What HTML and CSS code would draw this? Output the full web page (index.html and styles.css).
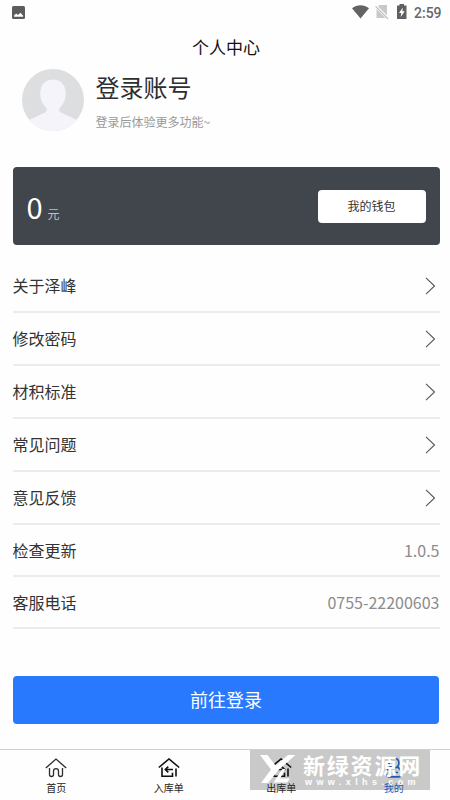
FILE: index.html
```html
<!DOCTYPE html>
<html lang="zh-CN">
<head>
<meta charset="utf-8">
<title>个人中心</title>
<link rel="stylesheet" href="styles.css">
</head>
<body>
<div class="screen">
  <div class="status">
    <svg class="status-pic" width="13" height="13" viewBox="0 0 13 13"><rect width="13" height="13" rx="1.5" fill="#5c5c5c"/><path d="M2 10.800V9.500L4.200 7.500l1.700 1.500L8.400 6.800l2.700 3v1z" fill="#fff"/></svg>
    <svg class="status-icons" width="56" height="16" viewBox="0 0 56 16">
      <path d="M0 4.200C5 .3 12 .3 17 4.200L8.500 14.500z" fill="#636363"/>
      <path d="M27.500 1h7.500v13H24.500V4z" fill="#c8c8c8"/><path d="M23 1.500l13.500 13.500" stroke="#fefefe" stroke-width="3"/><path d="M23.600 2.400l12.400 12.400" stroke="#bbb" stroke-width="1.200"/>
      <path d="M45 1.500h2.500V0H52v1.500h2.500V15H45z" fill="#606060"/><path d="M50.800 3.500L47 9h2.300l-.6 4 4-5.700h-2.300z" fill="#fff"/>
    </svg>
    <span class="time">2:59</span>
  </div>
  <h1 class="title">个人中心</h1>
  <div class="profile">
    <svg class="avatar" width="62" height="62" viewBox="0 0 62 62">
      <defs><clipPath id="disc"><circle cx="31" cy="31" r="31"/></clipPath></defs>
      <g clip-path="url(#disc)"><path fill="#dcdee0" d="M0 0h62v62H0z"/><path fill="#f4f4fa" d="M31 10.500c8 0 12.800 6 12.800 14 0 6-2.500 11-5.800 14-1.500 2-1 4 1.500 5.300L55 51v11H7V51l15.500-7.200C25 42.500 25.500 40.500 24 38.500c-3.300-3-5.800-8-5.800-14 0-8 4.800-14 12.800-14z"/></g>
    </svg>
    <div class="who"><div class="name">登录账号</div><div class="hint">登录后体验更多功能~</div></div>
  </div>
  <div class="wallet">
    <div class="money"><span class="amount">0</span><span class="unit">元</span></div>
    <div class="wallet-btn">我的钱包</div>
  </div>
  <div class="list">
    <div class="row"><span>关于泽峰</span><svg class="arrow" viewBox="0 0 11 18"><path d="M1 .8L9.500 9 1 17.200"/></svg></div>
    <div class="row"><span>修改密码</span><svg class="arrow" viewBox="0 0 11 18"><path d="M1 .8L9.500 9 1 17.200"/></svg></div>
    <div class="row"><span>材积标准</span><svg class="arrow" viewBox="0 0 11 18"><path d="M1 .8L9.500 9 1 17.200"/></svg></div>
    <div class="row"><span>常见问题</span><svg class="arrow" viewBox="0 0 11 18"><path d="M1 .8L9.500 9 1 17.200"/></svg></div>
    <div class="row"><span>意见反馈</span><svg class="arrow" viewBox="0 0 11 18"><path d="M1 .8L9.500 9 1 17.200"/></svg></div>
    <div class="row short"><span>检查更新</span><span class="value">1.0.5</span></div>
    <div class="row short"><span>客服电话</span><span class="value">0755-22200603</span></div>
  </div>
  <div class="login">前往登录</div>
  <div class="tabs">
    <div class="tab"><svg class="tab-icon" viewBox="0 0 22 20"><path d="M.8 10L11 1l10.200 9M4.500 10v6.500q0 2 2 2t2-2V13q0-2.300 2.500-2.300t2.500 2.300v3.500q0 2 2 2t2-2V10"/></svg><span>首页</span></div>
    <div class="tab"><svg class="tab-icon bold" viewBox="0 0 22 20"><path d="M.8 9.500L11 1l10.200 8.500M4 9.500v8.800h10.500v-3.500M18 10.500v8M15 11.500H7.500M10.300 8.700l-3 2.800 3 2.800"/></svg><span>入库单</span></div>
    <div class="tab"><svg class="tab-icon bold" viewBox="0 0 22 20"><path d="M.8 9.500L11 1l10.200 8.500M4 9.500v8.800h10.500v-3.500M18 10.500v8M7 11.500h7.500M11.700 8.700l3 2.800-3 2.800"/></svg><span>出库单</span></div>
    <div class="tab active"><svg class="tab-icon" viewBox="0 0 22 20"><circle cx="11" cy="5" r="5"/><path d="M7.500 9C4.500 11 3.500 13 3.500 16q0 2.800 3 2.800h9q3 0 3-2.800c0-3-1-5-4-7M11 14.500h4"/></svg><span>我的</span></div>
  </div>
  <div class="mark-bg"></div>
  <div class="watermark">
    <svg class="mark" width="36" height="32" viewBox="0 0 36 32"><path d="M0 1h7.500l8 10.500L28 1h7.500L19 15.500 8 29H1l10-13.500zM22.500 15h3l-5.500 9.500h10l-3 4H13.500z" fill="#fff"/></svg>
    <div class="mark-text"><div class="mark-cn">新绿资源网</div><div class="mark-url">www.xlhs.com</div></div>
  </div>
</div>
</body>
</html>
```
FILE: styles.css
```css
* { box-sizing: border-box; }
body { margin: 0; background: #fff; font-family: "Noto Sans CJK SC", sans-serif; color: #333; }
.screen { position: relative; isolation: isolate; width: 450px; height: 800px; overflow: hidden; display: flex; flex-direction: column; background: #fefefe; }
svg { display: block; flex: none; }
.status { height: 25px; flex: none; display: flex; align-items: center; padding: 0 7px 0 12px; }
.status-icons { margin-left: auto; margin-top: -1px; }
.time { margin-left: 6px; width: 29px; font: 500 14px/24px Roboto, sans-serif; color: #666; white-space: nowrap; }
.title { margin: 0; height: 44px; flex: none; font-size: 17px; line-height: 43px; font-weight: 400; text-align: center; color: #111; padding-left: 2px; }
.profile { display: flex; height: 62px; flex: none; padding-left: 21.5px; gap: 12px; }
.name { font-size: 24px; line-height: 35px; color: #2c2e30; }
.hint { margin-top: 9px; font-size: 12px; line-height: 18px; color: #999; }
.wallet { margin: 36px 10.5px 0 12.5px; height: 78px; flex: none; display: flex; align-items: center; justify-content: space-between; padding: 0 14px; border-radius: 4px; background: #41454c; }
.money { display: flex; align-items: baseline; gap: 5px; color: #fff; }
.amount { font-size: 29px; line-height: 42px; }
.unit { font-size: 12px; color: #c0c2c5; }
.wallet-btn { width: 108px; height: 33px; border-radius: 4px; background: #fff; font-size: 12px; line-height: 32px; text-align: center; }
.list { margin: 15px 10.5px 0 12.5px; flex: none; }
.row { height: 53px; display: flex; align-items: center; justify-content: space-between; padding-bottom: 1px; border-bottom: 2px solid #ebecee; font-size: 16px; }
.row.short { height: 52px; }
.value { color: #8c8c8c; }
.arrow { width: 11px; height: 18px; margin: 1px 4px 0 0; fill: none; stroke: #555; stroke-width: 1.1; }
.login { margin: 47px 11px 0 13px; height: 48px; flex: none; border-radius: 4px; background: #2979ff; color: #fff; font-size: 18px; line-height: 47px; text-align: center; }
.tabs { margin-top: auto; height: 51px; flex: none; display: flex; border-top: 1px solid #cfcfcf; }
.tab { flex: 1; display: flex; flex-direction: column; align-items: center; padding-top: 8px; gap: 2px; font-size: 10px; line-height: 15px; color: #222; }
.tab-icon { width: 22px; height: 20px; fill: none; stroke: #2c2c2c; stroke-width: 1.3; }
.tab-icon.bold { stroke: #111; stroke-width: 1.6; }
.active { color: #1c5cb4; }
.active .tab-icon { stroke: #1c5cb4; stroke-width: 1.7; }
.mark-bg, .watermark { position: absolute; left: 250px; top: 750px; width: 180px; height: 40px; }
.mark-bg { z-index: -1; background: #c9c9c9; }
.watermark { display: flex; padding: 4px 0 0 10px; gap: 7px; color: #fff; }
.mark-cn { margin-top: -2px; font-size: 22px; line-height: 24px; font-weight: 700; letter-spacing: 1.8px; white-space: nowrap; }
.mark-url { margin-top: 1px; padding-left: 2px; font: 700 9px/10px "Liberation Sans", sans-serif; letter-spacing: 4.4px; white-space: nowrap; }
```
